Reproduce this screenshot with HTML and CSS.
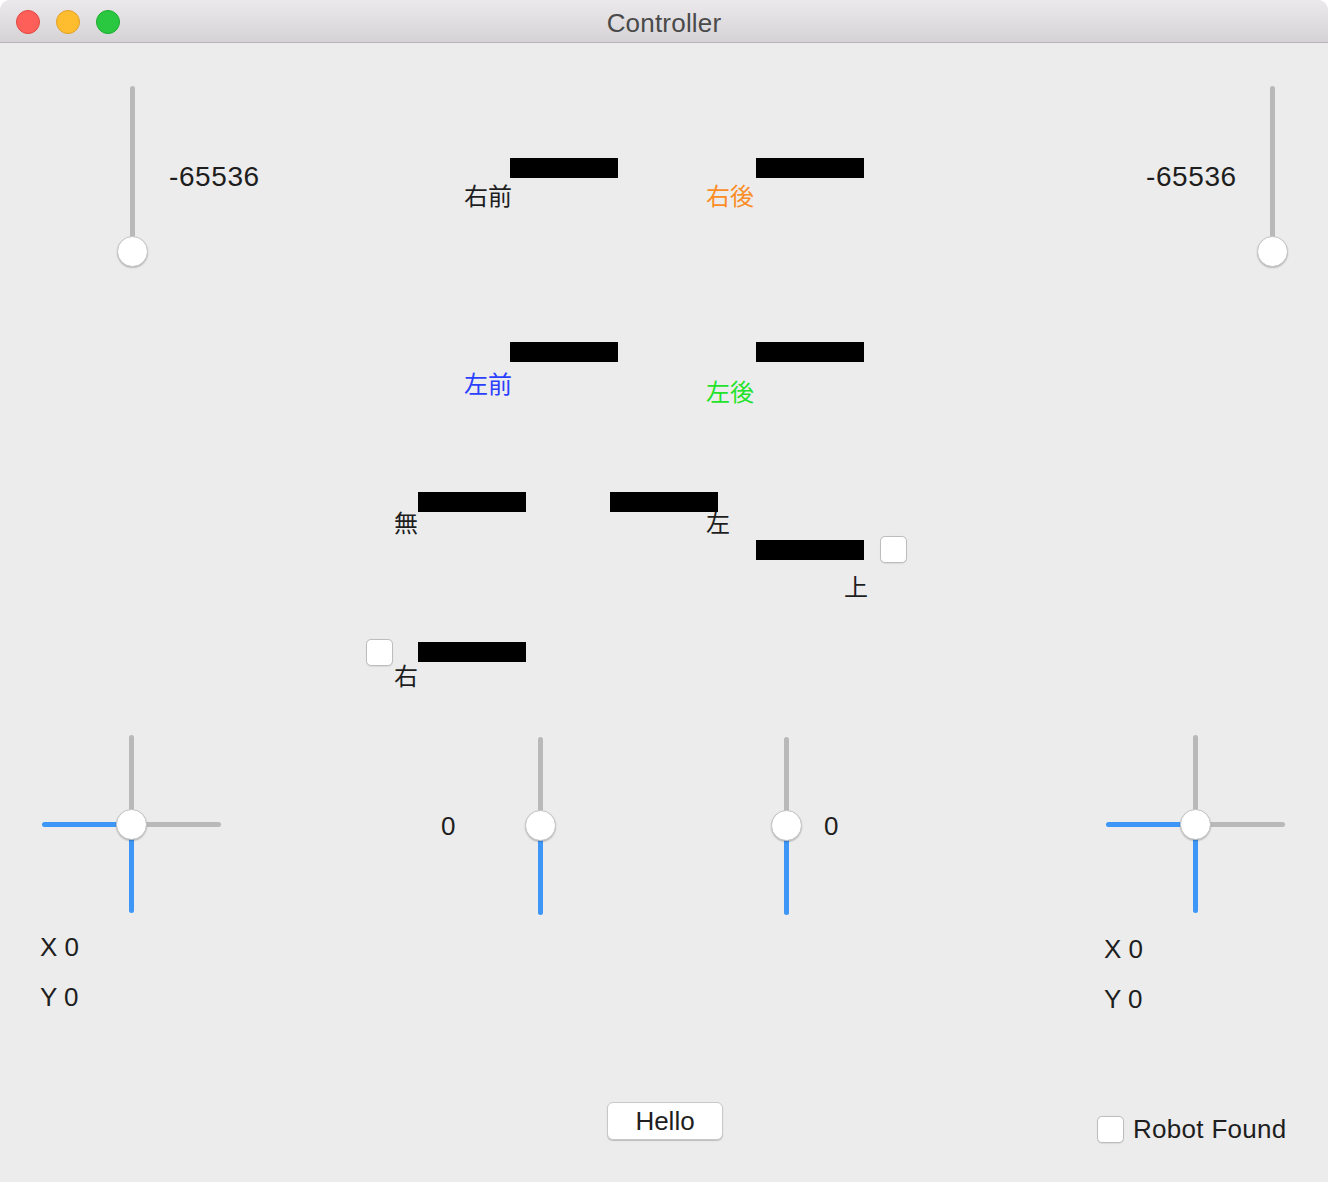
FILE: index.html
```html
<!DOCTYPE html>
<html lang="ja">
<head>
<meta charset="utf-8">
<title>Controller</title>
<link rel="stylesheet" href="styles.css">
</head>
<body>
<div class="window">
  <header class="titlebar">
    <div class="lights">
      <span class="light red"></span>
      <span class="light yellow"></span>
      <span class="light green"></span>
    </div>
    <div class="title">Controller</div>
  </header>

  <main class="canvas">
    <!-- top sliders -->
    <div class="vslider top-slider w-tl-slider"><span class="track gray tall"></span><span class="knob"></span></div>
    <div class="num big w-tl-num">-65536</div>
    <div class="num big w-tr-num">-65536</div>
    <div class="vslider top-slider w-tr-slider"><span class="track gray tall"></span><span class="knob"></span></div>

    <!-- motor bars -->
    <div class="bar w-bar1"></div>
    <div class="cjk w-lab1">右前</div>
    <div class="bar w-bar2"></div>
    <div class="cjk orange w-lab2">右後</div>

    <div class="bar w-bar3"></div>
    <div class="cjk blue w-lab3">左前</div>
    <div class="bar w-bar4"></div>
    <div class="cjk green w-lab4">左後</div>

    <div class="bar w-bar5"></div>
    <div class="cjk w-lab5">無</div>
    <div class="bar w-bar6"></div>
    <div class="cjk w-lab6">左</div>

    <div class="bar w-bar7"></div>
    <div class="check w-chk1"></div>
    <div class="cjk w-lab7">上</div>

    <div class="check w-chk2"></div>
    <div class="bar w-bar8"></div>
    <div class="cjk w-lab8">右</div>

    <!-- joysticks -->
    <div class="cross w-cross-l">
      <span class="c-top"><span class="track gray v"></span></span>
      <span class="c-left"><span class="track blue h"></span></span>
      <span class="knob"></span>
      <span class="c-right"><span class="track gray h"></span></span>
      <span class="c-bottom"><span class="track blue v"></span></span>
    </div>
    <div class="num w-xl">X 0</div>
    <div class="num w-yl">Y 0</div>

    <div class="num w-zero-l">0</div>
    <div class="vslider mid-slider w-mid-l"><span class="track gray upper"></span><span class="knob"></span><span class="track blue lower"></span></div>
    <div class="vslider mid-slider w-mid-r"><span class="track gray upper"></span><span class="knob"></span><span class="track blue lower"></span></div>
    <div class="num w-zero-r">0</div>

    <div class="cross w-cross-r">
      <span class="c-top"><span class="track gray v"></span></span>
      <span class="c-left"><span class="track blue h"></span></span>
      <span class="knob"></span>
      <span class="c-right"><span class="track gray h"></span></span>
      <span class="c-bottom"><span class="track blue v"></span></span>
    </div>
    <div class="num w-xr">X 0</div>
    <div class="num w-yr">Y 0</div>

    <button class="button w-hello">Hello</button>

    <label class="checkrow w-robot"><span class="check"></span><span class="num-inline">Robot Found</span></label>
  </main>
</div>
</body>
</html>
```

FILE: styles.css
```css
html, body {
  margin: 0;
  padding: 0;
  background: #ffffff;
}

body {
  font-family: "Liberation Sans", "Noto Sans CJK JP", sans-serif;
  color: #1e1e1e;
}

.window {
  width: 1328px;
  height: 1182px;
  display: flex;
  flex-direction: column;
  background: #ececec;
  border-radius: 10px 10px 0 0;
  overflow: hidden;
}

.titlebar {
  height: 42px;
  flex: 0 0 42px;
  border-bottom: 1px solid #b6b4b6;
  background: linear-gradient(#ebe9eb, #d5d3d5);
  position: relative;
  display: flex;
  align-items: center;
  justify-content: center;
}

.lights {
  position: absolute;
  left: 16px;
  top: 10px;
  display: flex;
  gap: 16px;
}

.light {
  width: 24px;
  height: 24px;
  border-radius: 50%;
  box-sizing: border-box;
}
.light.red { background: #fe5f58; border: 1px solid #e2463f; }
.light.yellow { background: #febc2f; border: 1px solid #e0a028; }
.light.green { background: #29c840; border: 1px solid #1dab2e; }

.title {
  font-size: 26px;
  color: #4a4a4a;
  letter-spacing: 0.2px;
  margin-top: 4px;
}

.canvas {
  position: relative;
  flex: 1;
}

.canvas > * {
  position: absolute;
}

/* generic parts */
.track {
  display: block;
  border-radius: 3px;
}
.track.gray { background: #b9b9b9; }
.track.blue { background: #3e97f6; }

.knob {
  display: block;
  width: 31px;
  height: 31px;
  box-sizing: border-box;
  border-radius: 50%;
  background: #ffffff;
  border: 1px solid #c4c4c4;
  box-shadow: 0 1px 1.5px rgba(0, 0, 0, 0.22);
  position: relative;
  z-index: 1;
}

.vslider {
  width: 31px;
  display: flex;
  flex-direction: column;
  align-items: center;
}

.top-slider .track.tall {
  width: 5px;
  height: 160px;
  margin-bottom: -10px;
}

.mid-slider .track {
  width: 5px;
}
.mid-slider .upper { height: 76px; margin-bottom: -3px; }
.mid-slider .lower { height: 77px; margin-top: -3px; }

.cross {
  display: grid;
  grid-template-columns: 74px 31px 74px;
  grid-template-rows: 74px 31px 73px;
}
.cross .c-top { grid-column: 2; grid-row: 1; display: flex; justify-content: center; }
.cross .c-left { grid-column: 1; grid-row: 2; display: flex; align-items: center; }
.cross .knob { grid-column: 2; grid-row: 2; }
.cross .c-right { grid-column: 3; grid-row: 2; display: flex; align-items: center; }
.cross .c-bottom { grid-column: 2; grid-row: 3; display: flex; justify-content: center; }
.cross .track.v { width: 5px; height: 77px; }
.cross .c-top .track.v { margin-bottom: -3px; align-self: flex-start; }
.cross .c-bottom .track.v { margin-top: -3px; height: 76px; }
.cross .track.h { height: 5px; width: 77px; }
.cross .c-left .track.h { margin-right: -3px; }
.cross .c-right .track.h { margin-left: -3px; }

.num, .num-inline {
  font-size: 26px;
  line-height: 30px;
  white-space: nowrap;
  color: #1e1e1e;
}
.num.big {
  font-size: 28px;
  letter-spacing: 0.6px;
}
.num-inline { letter-spacing: 0.3px; }

.cjk {
  font-family: "Noto Sans CJK JP", "Liberation Sans", sans-serif;
  font-size: 24px;
  line-height: 30px;
  white-space: nowrap;
  color: #1e1e1e;
}
.cjk.orange { color: #fb8d25; }
.cjk.blue { color: #2b40ff; }
.cjk.green { color: #22e32a; }

.bar {
  width: 108px;
  height: 20px;
  background: #000000;
}

.check {
  display: block;
  width: 27px;
  height: 27px;
  box-sizing: border-box;
  border-radius: 5px;
  background: #ffffff;
  border: 1px solid #bdbdbd;
  box-shadow: 0 0.5px 1px rgba(0, 0, 0, 0.08);
}

.button {
  width: 116px;
  height: 38px;
  box-sizing: border-box;
  border-radius: 6px;
  background: #ffffff;
  border: 1px solid #c8c8c8;
  box-shadow: 0 1px 1px rgba(0, 0, 0, 0.2);
  font-family: "Liberation Sans", sans-serif;
  font-size: 26px;
  color: #1e1e1e;
  padding: 0;
  line-height: 34px;
}

.checkrow {
  display: flex;
  align-items: center;
  gap: 9px;
}

/* widget geometry on the form canvas (window content origin) */
.w-tl-slider { left: 117px; top: 43px; }
.w-tr-slider { left: 1257px; top: 43px; }
.w-tl-num { left: 169px; top: 119px; }
.w-tr-num { left: 1146px; top: 119px; }

.w-bar1 { left: 510px; top: 115px; }
.w-bar2 { left: 756px; top: 115px; }
.w-lab1 { left: 464px; top: 137px; }
.w-lab2 { left: 706px; top: 137px; }

.w-bar3 { left: 510px; top: 299px; }
.w-bar4 { left: 756px; top: 299px; }
.w-lab3 { left: 464px; top: 325px; }
.w-lab4 { left: 706px; top: 333px; }

.w-bar5 { left: 418px; top: 449px; }
.w-bar6 { left: 610px; top: 449px; }
.w-lab5 { left: 394px; top: 464px; }
.w-lab6 { left: 706px; top: 464px; }

.w-bar7 { left: 756px; top: 497px; }
.w-chk1 { left: 880px; top: 493px; }
.w-lab7 { left: 844px; top: 528px; }

.w-chk2 { left: 366px; top: 596px; }
.w-bar8 { left: 418px; top: 599px; }
.w-lab8 { left: 394px; top: 617px; }

.w-cross-l { left: 42px; top: 692px; }
.w-cross-r { left: 1106px; top: 692px; }
.w-xl { left: 40px; top: 889px; }
.w-yl { left: 40px; top: 939px; }
.w-xr { left: 1104px; top: 891px; }
.w-yr { left: 1104px; top: 941px; }

.w-mid-l { left: 525px; top: 694px; }
.w-mid-r { left: 771px; top: 694px; }
.w-zero-l { left: 441px; top: 768px; }
.w-zero-r { left: 824px; top: 768px; }

.w-hello { left: 607px; top: 1059px; }
.w-robot { left: 1097px; top: 1071px; }
```
